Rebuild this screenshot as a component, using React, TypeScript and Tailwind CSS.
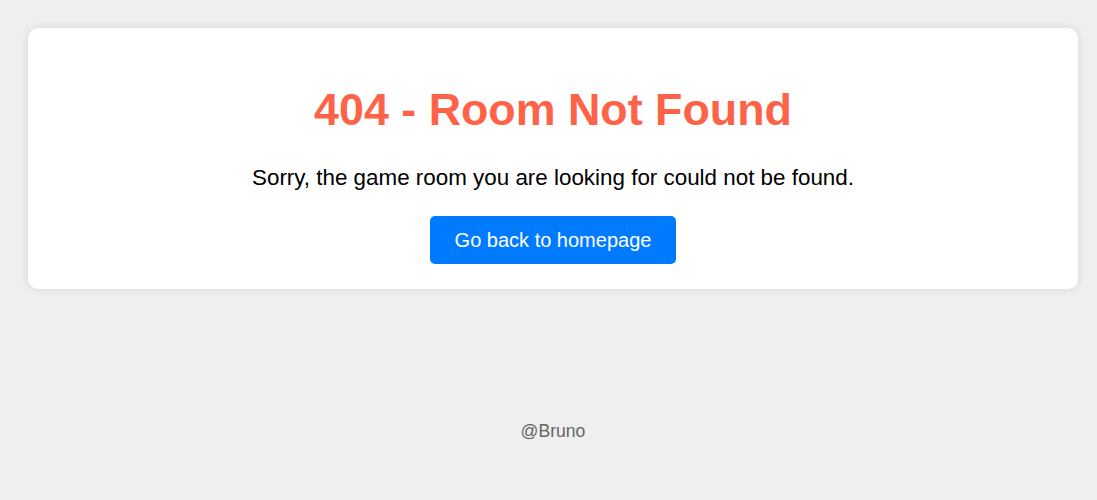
const font = { fontFamily: '"Liberation Sans", Arial, sans-serif' };

export default function App() {
  return (
    <div className="min-h-screen w-full bg-[#efefef] pt-[28px]" style={font}>
      <div className="ml-[28px] w-[1050px] flex flex-col items-center">
        <div className="w-full bg-white rounded-[10px] shadow-[0_0_10px_rgba(0,0,0,0.1)] flex flex-col items-center pt-[55px] pb-[25px]">
          <h1 className="text-[44.8px] leading-[52px] font-bold text-[#ff6347]">404 - Room Not Found</h1>
          <p className="mt-[30px] text-[22.4px] leading-[26px] text-black">
            Sorry, the game room you are looking for could not be found.
          </p>
          <button className="mt-[25px] h-[48px] px-[25px] rounded-[5px] bg-[#007bff] text-white text-[20px] leading-[24px]">
            Go back to homepage
          </button>
        </div>
        <footer className="mt-[132px] text-[17.6px] leading-[20px] text-[#666]">@Bruno</footer>
      </div>
    </div>
  );
}
